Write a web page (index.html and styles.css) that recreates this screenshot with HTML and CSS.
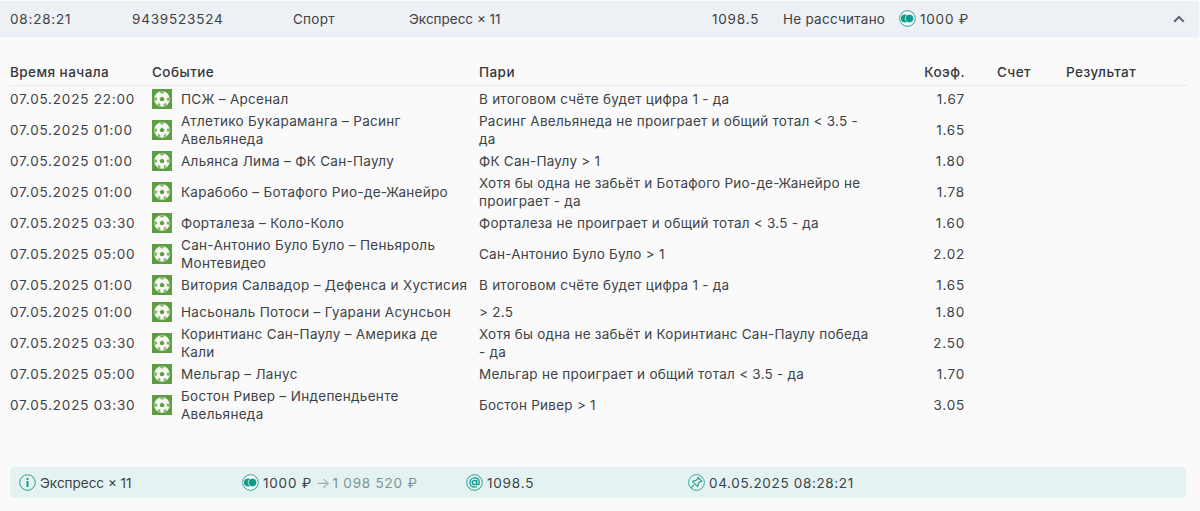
FILE: index.html
```html
<!DOCTYPE html>
<html lang="ru">
<head>
<meta charset="utf-8">
<title>Экспресс</title>
<link rel="stylesheet" href="styles.css">
</head>
<body>
<svg class="defs" width="0" height="0" aria-hidden="true">
  <defs>
    <symbol id="ball" viewBox="0 0 20 20">
      <rect width="20" height="20" fill="#5f9d43"/>
      <circle cx="10" cy="10" r="7.800" fill="#f4f8f1"/>
      <path d="M10 7.600l2.400 1.800-.9 2.700h-3l-.9-2.700z" fill="#5f9d43"/>
      <path d="M10 2.300l2 .4-.2 1.100-1.800.9-1.800-.9-.2-1.100zM17.500 8.600l.1 2.300-1.300 1-1.300-.8-.3-1.600 1.100-1zM2.500 8.600l-.1 2.300 1.300 1 1.300-.8.300-1.600-1.100-1zM6.800 16.800l-1.300-1.300.7-1.300 1.600.2.700 1.600-.4 1zM13.200 16.800l1.300-1.300-.7-1.300-1.600.2-.7 1.600.4 1z" fill="#7fb066"/>
    </symbol>
    <symbol id="coin" viewBox="0 0 17 17">
      <circle cx="8.500" cy="8.500" r="7.800" fill="#fff" stroke="#2a9d8f" stroke-width="1"/>
      <circle cx="6.100" cy="8.500" r="4.100" fill="#0f9a8c"/>
      <circle cx="10.500" cy="8.500" r="4.200" fill="#0f9a8c" stroke="#e4f3f2" stroke-width=".8"/>
    </symbol>
    <symbol id="info" viewBox="0 0 17 17">
      <circle cx="8.500" cy="8.500" r="7.800" fill="none" stroke="#2a9d8f" stroke-width="1"/>
      <circle cx="8.500" cy="4.900" r="1.100" fill="#0f9a8c"/>
      <rect x="7.500" y="7" width="2" height="6" fill="#0f9a8c"/>
    </symbol>
    <symbol id="at" viewBox="0 0 17 17">
      <circle cx="8.500" cy="8.500" r="7.800" fill="none" stroke="#2a9d8f" stroke-width="1"/>
      <circle cx="8.500" cy="8.500" r="2.200" fill="none" stroke="#0f9a8c" stroke-width="1.300"/>
      <path d="M10.700 6v3.500c0 1.700 2.600 1.700 2.600-.6 0-3-2-5-4.700-5a4.600 4.600 0 0 0 0 9.200c1 0 1.700-.2 2.400-.6" fill="none" stroke="#0f9a8c" stroke-width="1.300"/>
    </symbol>
    <symbol id="pin" viewBox="0 0 17 17">
      <circle cx="8.500" cy="8.500" r="7.900" fill="none" stroke="#2a9d8f" stroke-width=".9"/>
      <path d="M9.900 3.200l3.900 3.900-.9.700-1.100.1-1.700 1.700.1 1.900-.9.800-4.700-4.700.8-.9 1.900.1L10 4.900l.1-1.100zM6.100 10.900l-2.800 2.800" fill="none" stroke="#1b9688" stroke-width="1.100"/>
    </symbol>
  </defs>
</svg>

<header class="bar">
  <span class="num">08:28:21</span>
  <span class="num">9439523524</span>
  <span>Спорт</span>
  <span class="bar-type">Экспресс × 11</span>
  <span class="num">1098.5</span>
  <span>Не рассчитано</span>
  <span class="bar-stake"><svg class="ico-sm"><use href="#coin"/></svg><span class="num">1000 ₽</span></span>
  <svg class="chev" viewBox="0 0 12 8"><path d="M1.200 6.800L6 2l4.800 4.800" fill="none" stroke="#5d6b75" stroke-width="2.200"/></svg>
</header>

<section class="bets">
  <div class="row head">
    <div>Время начала</div><div>Событие</div><div>Пари</div><div class="odds">Коэф.</div><div>Счет</div><div>Результат</div>
  </div>
  <div class="row"><div class="num">07.05.2025 22:00</div><div class="event"><svg class="ball"><use href="#ball"/></svg><span>ПСЖ – Арсенал</span></div><div>В итоговом счёте будет цифра 1 - да</div><div class="odds num">1.67</div><div></div><div></div></div>
  <div class="row"><div class="num">07.05.2025 01:00</div><div class="event"><svg class="ball"><use href="#ball"/></svg><span>Атлетико Букараманга – Расинг<br>Авельянеда</span></div><div>Расинг Авельянеда не проиграет и общий тотал &lt; 3.5 -<br>да</div><div class="odds num">1.65</div><div></div><div></div></div>
  <div class="row"><div class="num">07.05.2025 01:00</div><div class="event"><svg class="ball"><use href="#ball"/></svg><span>Альянса Лима – ФК Сан-Паулу</span></div><div>ФК Сан-Паулу &gt; 1</div><div class="odds num">1.80</div><div></div><div></div></div>
  <div class="row"><div class="num">07.05.2025 01:00</div><div class="event"><svg class="ball"><use href="#ball"/></svg><span>Карабобо – Ботафого Рио-де-Жанейро</span></div><div>Хотя бы одна не забьёт и Ботафого Рио-де-Жанейро не<br>проиграет - да</div><div class="odds num">1.78</div><div></div><div></div></div>
  <div class="row"><div class="num">07.05.2025 03:30</div><div class="event"><svg class="ball"><use href="#ball"/></svg><span>Форталеза – Коло-Коло</span></div><div>Форталеза не проиграет и общий тотал &lt; 3.5 - да</div><div class="odds num">1.60</div><div></div><div></div></div>
  <div class="row"><div class="num">07.05.2025 05:00</div><div class="event"><svg class="ball"><use href="#ball"/></svg><span>Сан-Антонио Було Було – Пеньяроль<br>Монтевидео</span></div><div>Сан-Антонио Було Було &gt; 1</div><div class="odds num">2.02</div><div></div><div></div></div>
  <div class="row"><div class="num">07.05.2025 01:00</div><div class="event"><svg class="ball"><use href="#ball"/></svg><span>Витория Салвадор – Дефенса и Хустисия</span></div><div>В итоговом счёте будет цифра 1 - да</div><div class="odds num">1.65</div><div></div><div></div></div>
  <div class="row"><div class="num">07.05.2025 01:00</div><div class="event"><svg class="ball"><use href="#ball"/></svg><span>Насьональ Потоси – Гуарани Асунсьон</span></div><div>&gt; 2.5</div><div class="odds num">1.80</div><div></div><div></div></div>
  <div class="row"><div class="num">07.05.2025 03:30</div><div class="event"><svg class="ball"><use href="#ball"/></svg><span>Коринтианс Сан-Паулу – Америка де<br>Кали</span></div><div>Хотя бы одна не забьёт и Коринтианс Сан-Паулу победа<br>- да</div><div class="odds num">2.50</div><div></div><div></div></div>
  <div class="row"><div class="num">07.05.2025 05:00</div><div class="event"><svg class="ball"><use href="#ball"/></svg><span>Мельгар – Ланус</span></div><div>Мельгар не проиграет и общий тотал &lt; 3.5 - да</div><div class="odds num">1.70</div><div></div><div></div></div>
  <div class="row"><div class="num">07.05.2025 03:30</div><div class="event"><svg class="ball"><use href="#ball"/></svg><span>Бостон Ривер – Индепендьенте<br>Авельянеда</span></div><div>Бостон Ривер &gt; 1</div><div class="odds num">3.05</div><div></div><div></div></div>
</section>

<footer class="summary">
  <span class="sum-item"><svg class="ico"><use href="#info"/></svg>Экспресс × 11</span>
  <span class="sum-item"><svg class="ico"><use href="#coin"/></svg><span class="num">1000 ₽</span><span class="sum-win"><span class="arrow">→</span><span class="num">1 098 520 ₽</span></span></span>
  <span class="sum-item"><svg class="ico"><use href="#at"/></svg><span class="num">1098.5</span></span>
  <span class="sum-item"><svg class="ico"><use href="#pin"/></svg><span class="num date">04.05.2025 08:28:21</span></span>
</footer>
</body>
</html>
```
FILE: styles.css
```css
* { box-sizing: border-box; }
html, body { margin: 0; height: 100%; }
body {
  background: #fafafa;
  color: #3d4246;
  font-family: Inter, "Noto Sans", sans-serif;
  font-size: 13.500px;
  letter-spacing: .25px;
  padding-top: 1px;
  overflow: hidden;
}
.defs { display: block; height: 0; }
.num { letter-spacing: .8px; }
.date { letter-spacing: .65px; }

.bar {
  height: 35.500px;
  width: 1199px;
  background: #edf0f5;
  display: grid;
  grid-template-columns: 122px 161px 116px 303px 71px 116px 1fr 26px;
  align-items: center;
  padding-left: 10px;
}
.bar-type { letter-spacing: 0; }
.bar-stake { display: flex; align-items: center; gap: 4px; }
.ico-sm { width: 17px; height: 17px; }
.chev { width: 12px; height: 8px; }

.bets { margin: 25.500px 13px 0 10px; }
.row {
  display: grid;
  grid-template-columns: 142px 327px 400px 118px 69px 1fr;
  align-items: center;
  min-height: 27px;
  line-height: 17.500px;
}
.row .odds { text-align: right; margin-right: 32px; }
.head {
  min-height: 24px;
  padding-bottom: 2px;
  font-weight: 500;
  color: #33383c;
  border-bottom: 1px solid #e8eaec;
  letter-spacing: .45px;
}
.event { display: flex; align-items: center; gap: 9px; letter-spacing: .3px; }
.ball { width: 20px; height: 20px; flex: none; margin-bottom: 1px; }

.summary {
  position: absolute;
  left: 10px;
  right: 14px;
  top: 467px;
  height: 31px;
  background: #e4f3f2;
  border-radius: 4px;
  display: grid;
  grid-template-columns: 223px 224px 222px 1fr;
  align-items: center;
  padding-left: 9px;
  letter-spacing: 0;
}
.sum-item { display: flex; align-items: center; gap: 4px; }
.ico { width: 17px; height: 17px; flex: none; }
.sum-win { color: #7e9491; display: flex; align-items: center; gap: 2px; }
.arrow { color: #9db0ae; font-size: 15px; }
```
